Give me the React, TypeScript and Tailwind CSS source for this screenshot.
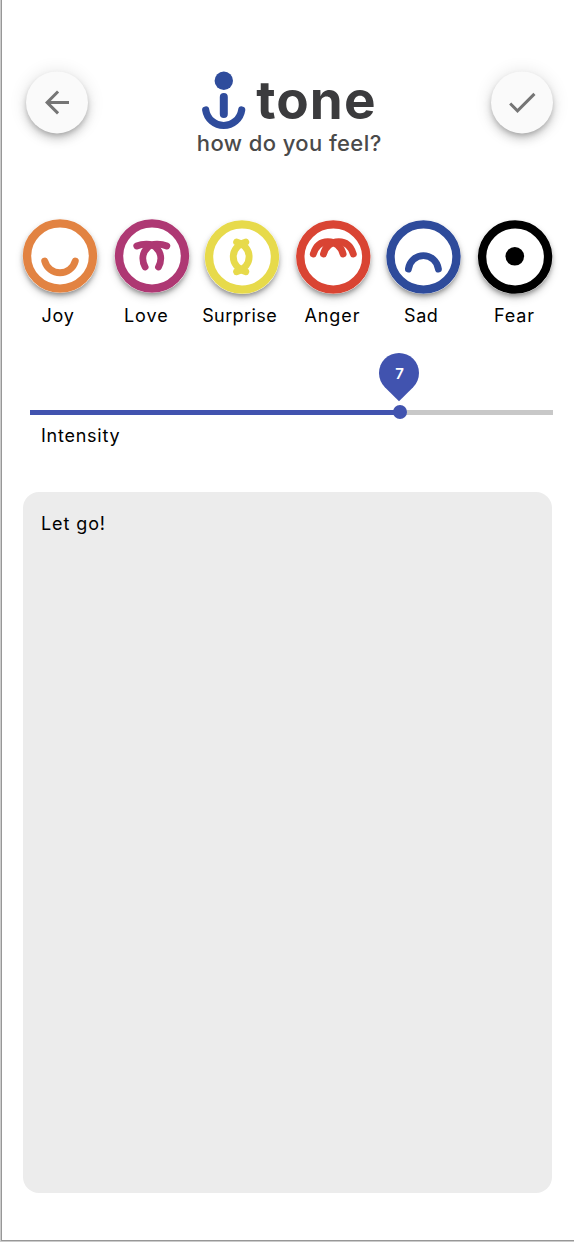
import type { ReactNode } from 'react';

type Mood = {
  name: string;
  color: string;
  shift: string;
  labelClass: string;
  face: ReactNode;
};

const moods: Mood[] = [
  {
    name: 'Joy',
    color: 'text-[#e28342]',
    shift: '-translate-x-[0.5px]',
    labelClass: '-translate-x-[2.5px] tracking-[0.7px]',
    face: <path d="M22.2 42a15.85 15.85 0 0 0 30.6 0" />,
  },
  {
    name: 'Love',
    color: 'text-[#ae3873]',
    shift: 'translate-x-[0.5px]',
    labelClass: '-translate-x-[5px] tracking-[0.9px]',
    face: (
      <>
        <path d="M22.3 27C28 24.6 37 24.2 41 28C47.5 34 47.2 42 44 48" />
        <path d="M52.3 27C46.6 24.6 37.6 24.2 33.6 28C27.1 34 27.4 42 30.6 48" />
      </>
    ),
  },
  {
    name: 'Surprise',
    color: 'text-[#e7da4b]',
    shift: 'translate-y-px -translate-x-[0.5px]',
    labelClass: '-translate-x-[2.5px] tracking-[0.4px]',
    face: (
      <>
        <path d="M41.3 22C24.6 27 24.6 46.5 41.3 51.7" />
        <path d="M32.1 22C48.8 27 48.8 46.5 32.1 51.7" />
      </>
    ),
  },
  {
    name: 'Anger',
    color: 'text-[#d94433]',
    shift: 'translate-y-px translate-x-[0.8px]',
    labelClass: '-translate-x-[0.5px] tracking-[0.9px]',
    face: (
      <>
        <path d="M17.5 34C20 26 25 21.8 32 21.8C40 21.8 45 26 47.3 34" />
        <path d="M57.5 34C55 26 50 21.8 43 21.8C35 21.8 30 26 27.7 34" />
      </>
    ),
  },
  {
    name: 'Sad',
    color: 'text-[#2e4b9b]',
    shift: 'translate-y-px',
    labelClass: '-translate-x-[2.5px] tracking-[0.5px]',
    face: <path d="M22.4 49a15.1 15.1 0 0 1 30 0" />,
  },
  {
    name: 'Fear',
    color: 'text-black',
    shift: 'translate-y-px translate-x-[0.6px]',
    labelClass: 'translate-x-0 tracking-[0.9px]',
    face: <circle cx="37.2" cy="36.3" r="9.3" fill="currentColor" stroke="none" />,
  },
];

function RoundButton({ label, path }: { label: string; path: string }) {
  return (
    <button
      aria-label={label}
      className="flex size-[62px] translate-y-[0.4px] items-center justify-center rounded-full bg-[#fafafa] text-[#757575] shadow-[0_3px_5px_-1px_rgba(0,0,0,0.2),0_6px_10px_rgba(0,0,0,0.14),0_1px_18px_rgba(0,0,0,0.12)]"
    >
      <svg viewBox="0 0 24 24" className="size-9" fill="currentColor">
        <path d={path} />
      </svg>
    </button>
  );
}

function MoodButton({ mood }: { mood: Mood }) {
  return (
    <button className="flex w-[75px] flex-col items-center">
      <span className={`block h-[74px] w-[75px] rounded-full ${mood.shift} ${mood.color}`}>
        <svg
          viewBox="0 0 75 74"
          className="h-[74px] w-[75px] overflow-visible rounded-full shadow-[0_3px_5px_-1px_rgba(0,0,0,0.4),0_5px_8px_rgba(0,0,0,0.14)]"
          fill="none"
          stroke="currentColor"
          strokeWidth="6.9"
          strokeLinecap="round"
        >
          <ellipse cx="37.5" cy="37" rx="33" ry="32.6" fill="#fff" strokeWidth="8.4" />
          {mood.face}
        </svg>
      </span>
      <span className={`mt-[9px] whitespace-nowrap text-[18px] leading-[27px] text-black ${mood.labelClass}`}>
        {mood.name}
      </span>
    </button>
  );
}

export default function App() {
  return (
    <div className="h-[1242px] w-[574px] overflow-hidden border-b border-l border-[#cbcbcb] bg-white font-['Inter',sans-serif]">
      <div className="flex h-full flex-col border-b border-l border-[#979797] pl-[21px] pr-[22px]">
        <header className="-mr-[0.5px] flex h-[219px] items-start justify-between pl-[3px] pt-[71px]">
          <RoundButton label="Back" path="M20 11H7.83l5.59-5.59L12 4l-8 8 8 8 1.41-1.41L7.83 13H20v-2z" />
          <div className="flex w-[190px] flex-col items-center">
            <div className="flex h-[60px] w-full items-start pl-[6px]">
              <svg viewBox="0 0 46 60" className="h-[60px] w-[46px] shrink-0 text-[#2f4c9c]" fill="currentColor">
                <circle cx="23.8" cy="9.8" r="9.2" />
                <rect x="19.8" y="22" width="8" height="25" rx="4" />
                <path d="M5.7 39a18.2 18.2 0 0 0 36 0" fill="none" stroke="currentColor" strokeWidth="7.2" strokeLinecap="round" />
              </svg>
              <h1 className="ml-[10px] text-[53px] font-bold leading-[59px] tracking-[1.1px] text-[#3b3b3d]">tone</h1>
            </div>
            <p className="-translate-y-px whitespace-nowrap text-[22px] font-medium leading-[26px] tracking-[0.4px] text-[#4a4a4a]">how do you feel?</p>
          </div>
          <RoundButton label="Save" path="M9 16.17 4.83 12l-1.42 1.41L9 19 21 7l-1.41-1.41z" />
        </header>

        <section className="flex h-[110px] shrink-0 justify-between">
          {moods.map((mood) => (
            <MoodButton key={mood.name} mood={mood} />
          ))}
        </section>

        <section className="flex h-[163px] shrink-0 flex-col pl-[7px] pt-[81px]">
          <div className="relative h-[5px] w-[523px] bg-[#c8c8c8]">
            <div className="h-[5px] w-[370px] bg-[#4153af]" />
            <div className="absolute -top-[5px] left-[363px] size-[14px] rounded-full bg-[#4153af]" />
            <div className="absolute -top-[57.5px] left-[349px] flex size-10 -rotate-45 items-center justify-center rounded-[50%_50%_50%_0] bg-[#4153af]">
              <span className="rotate-45 text-[15px] font-semibold leading-none text-white">7</span>
            </div>
          </div>
          <span className="mt-[8px] pl-[11px] text-[18px] leading-[26px] tracking-[0.75px] text-black">Intensity</span>
        </section>

        <section className="h-[701px] w-[529px] rounded-[16px] bg-[#ececec] px-[18px] pt-[18px] text-[18px] leading-[27px] tracking-[0.9px] text-black">
          Let go!
        </section>
      </div>
    </div>
  );
}
